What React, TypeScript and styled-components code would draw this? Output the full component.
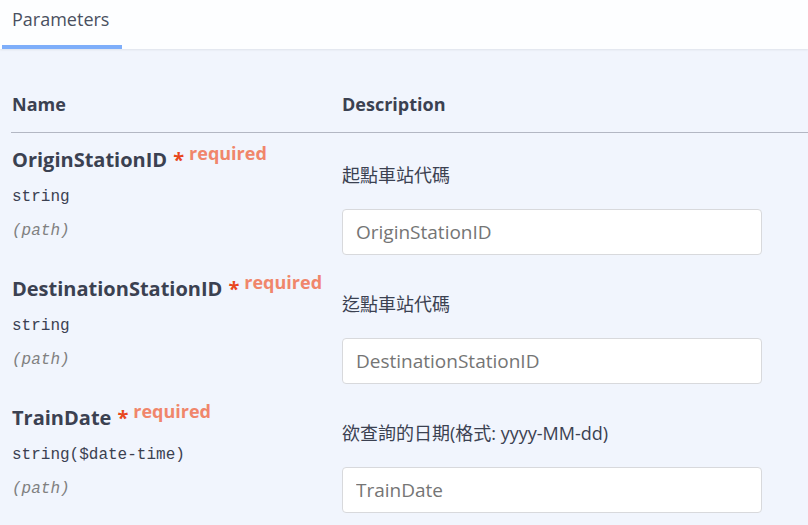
import styled, { createGlobalStyle } from "styled-components";

interface Parametro {
    nome: string;
    tipo: string;
    local: string;
    descricao: string;
}

const GlobalStyle = createGlobalStyle`
    html, body {
        margin: 0;
        padding: 0;
        background: #f1f5fd;
    }
    body {
        font-family: "Open Sans", "Noto Sans", "Noto Sans CJK TC", sans-serif;
        color: #3b4151;
    }
`

const Secao = styled.section`
    width: 808px;
    height: 525px;
    overflow: hidden;
    background: #f1f5fd;
`

const Cabecalho = styled.header`
    height: 49px;
    background: #fdfeff;
    box-shadow: 0 1px 2px rgba(0, 0, 0, 0.08);
    display: flex;
    align-items: flex-end;
    padding-left: 2px;
`

const Aba = styled.div`
    width: 120px;
    height: 49px;
    box-sizing: border-box;
    border-bottom: 4px solid #7eaefa;
    padding: 7px 0 0 10px;
    font-size: 18px;
    color: #4a5060;
`

const Tabela = styled.div`
    padding-left: 11px;
`

const LinhaTitulo = styled.div`
    display: grid;
    grid-template-columns: 331px 1fr;
    height: 84px;
    align-items: end;
    padding-bottom: 16px;
    box-sizing: border-box;
    border-bottom: 1px solid #b3b7c3;
    font-size: 18px;
    font-weight: 700;
    color: #3b4151;
    span:first-child {
        padding-left: 1px;
    }
`

const Linha = styled.div`
    display: grid;
    grid-template-columns: 331px 1fr;
    height: 129px;
`

const CelulaNome = styled.div`
    padding-top: 14px;
    padding-left: 1px;
`

const Nome = styled.div`
    font-size: 20px;
    font-weight: 700;
    line-height: 26px;
    color: #3b4151;
    white-space: nowrap;
`

const Asterisco = styled.span`
    color: #e8471d;
    margin-left: 6px;
`

const Obrigatorio = styled.span`
    color: #f0866b;
    font-size: 18px;
    position: relative;
    top: -7px;
    margin-left: 5px;
`

const Tipo = styled.div`
    margin-top: 13px;
    font-family: "Liberation Mono", "DejaVu Sans Mono", monospace;
    font-size: 16px;
    line-height: 22px;
    color: #3b4151;
`

const Local = styled(Tipo)`
    margin-top: 12px;
    font-style: italic;
    color: #808080;
`

const CelulaDescricao = styled.div`
    padding-top: 30px;
`

const Descricao = styled.div`
    font-size: 18px;
    line-height: 24px;
    color: #3b4151;
`

const Campo = styled.input`
    display: block;
    margin-top: 22px;
    width: 420px;
    height: 46px;
    box-sizing: border-box;
    border: 1px solid #d8d9dc;
    border-radius: 4px;
    background: #fff;
    padding: 0 13px;
    font-family: "Open Sans", "Noto Sans", sans-serif;
    font-size: 19px;
    outline: none;
    &::placeholder {
        color: #757575;
    }
`

const parametros: Parametro[] = [
    { nome: "OriginStationID", tipo: "string", local: "(path)", descricao: "起點車站代碼" },
    { nome: "DestinationStationID", tipo: "string", local: "(path)", descricao: "迄點車站代碼" },
    { nome: "TrainDate", tipo: "string($date-time)", local: "(path)", descricao: "欲查詢的日期(格式: yyyy-MM-dd)" },
]

const App = () => {
    return (
        <>
            <GlobalStyle />
            <Secao>
                <Cabecalho>
                    <Aba>Parameters</Aba>
                </Cabecalho>
                <Tabela>
                    <LinhaTitulo>
                        <span>Name</span>
                        <span>Description</span>
                    </LinhaTitulo>
                    {parametros.map(p => (
                        <Linha key={p.nome}>
                            <CelulaNome>
                                <Nome>
                                    {p.nome}
                                    <Asterisco>*</Asterisco>
                                    <Obrigatorio>required</Obrigatorio>
                                </Nome>
                                <Tipo>{p.tipo}</Tipo>
                                <Local>{p.local}</Local>
                            </CelulaNome>
                            <CelulaDescricao>
                                <Descricao>{p.descricao}</Descricao>
                                <Campo placeholder={p.nome} />
                            </CelulaDescricao>
                        </Linha>
                    ))}
                </Tabela>
            </Secao>
        </>
    )
}

export default App
